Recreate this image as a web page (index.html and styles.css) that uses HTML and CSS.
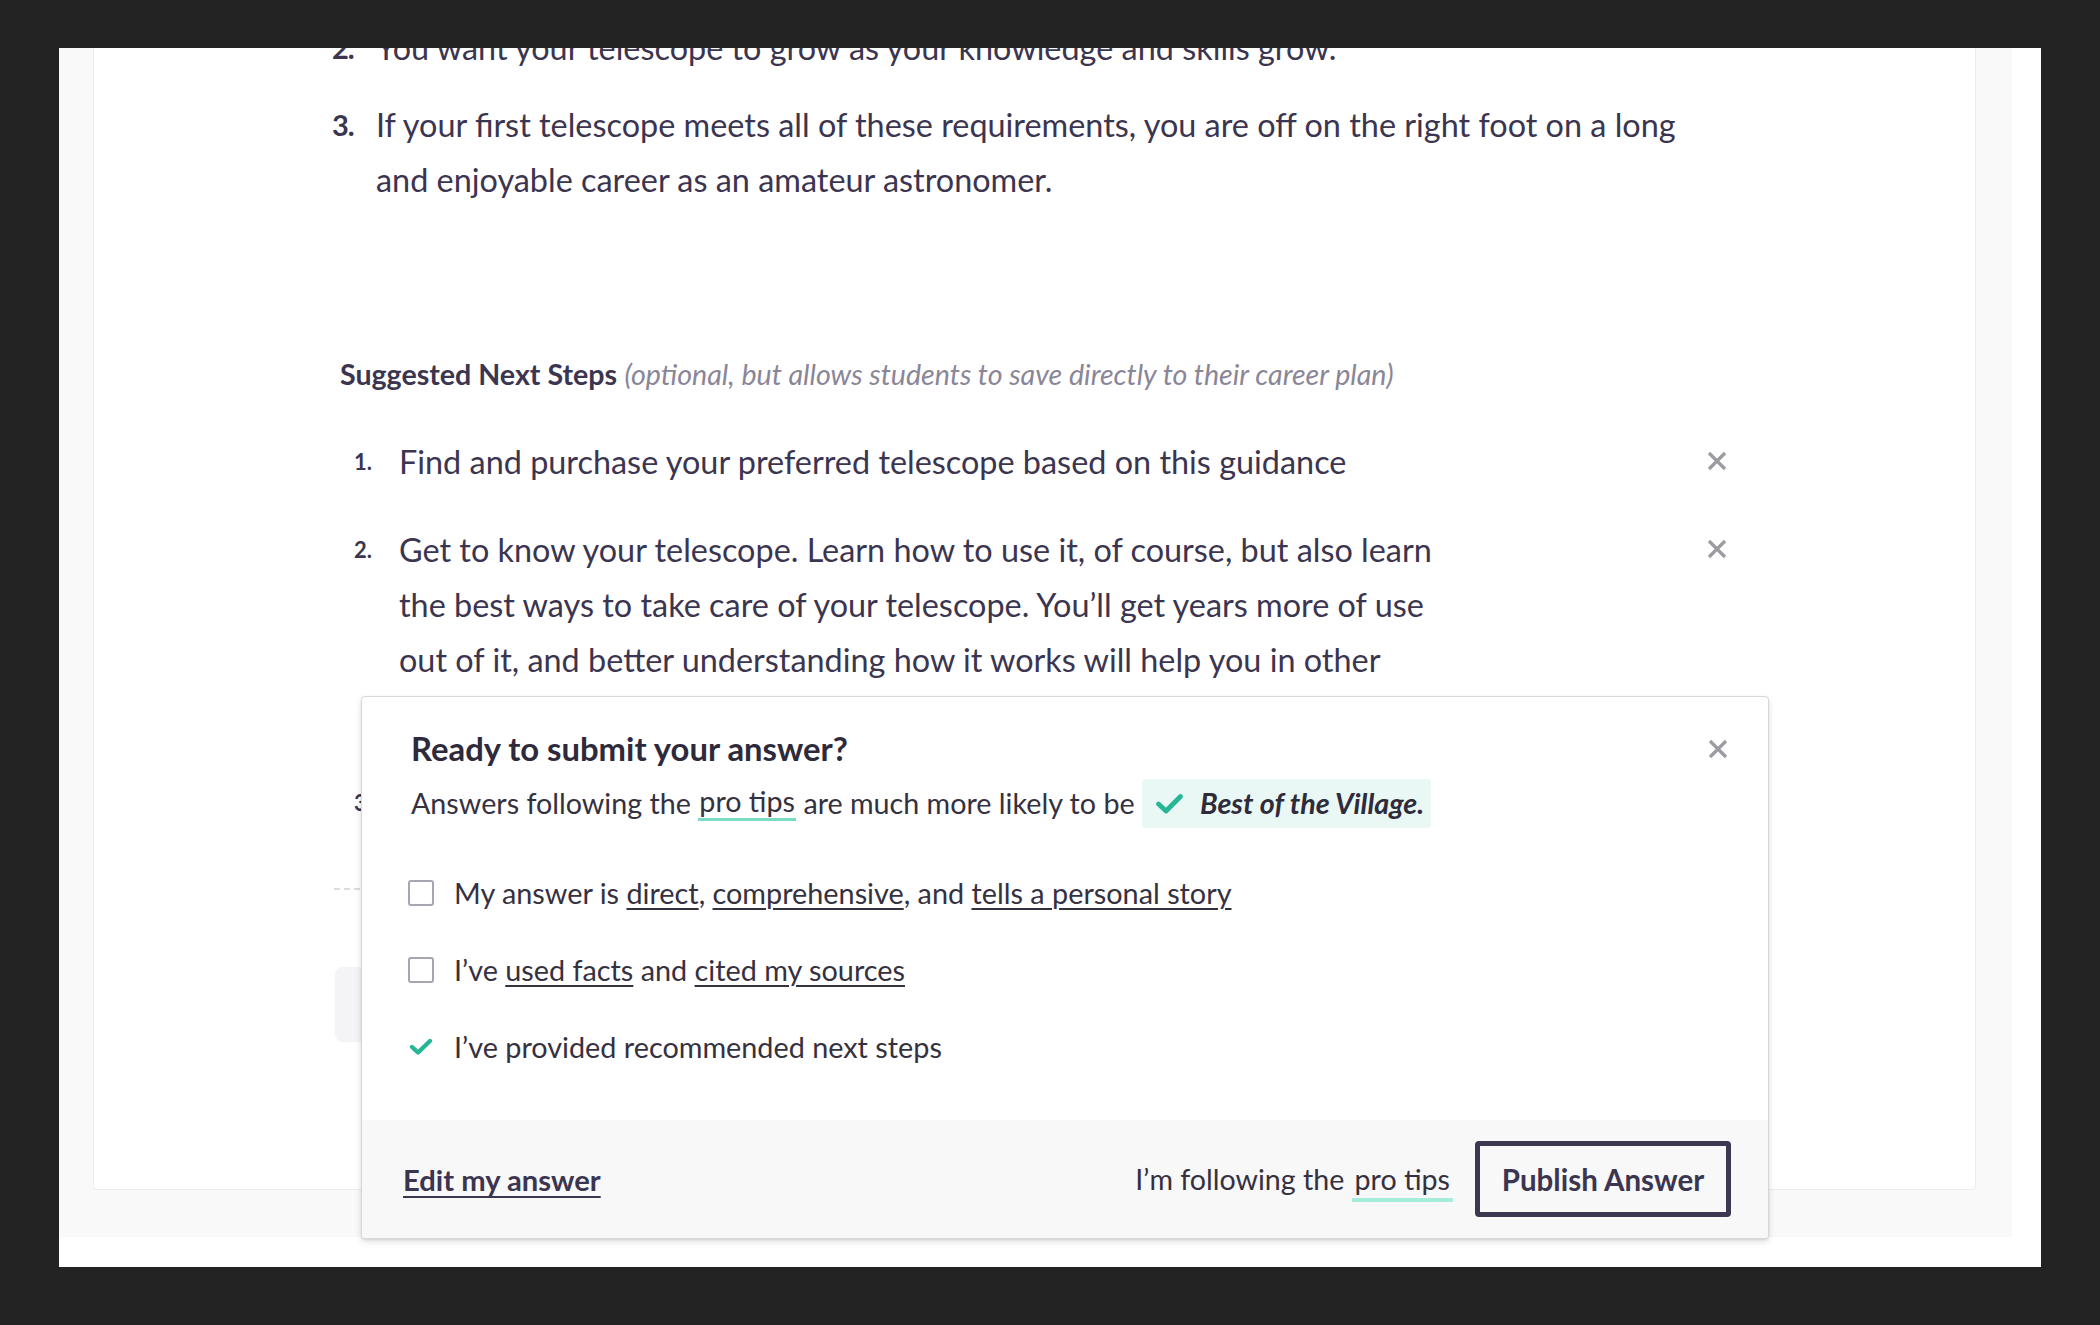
FILE: index.html
```html
<!DOCTYPE html>
<html lang="en">
<head>
<meta charset="utf-8">
<title>Ready to submit your answer?</title>
<link rel="stylesheet" href="styles.css">
</head>
<body>
<div class="screen">
  <div class="page">
    <div class="canvas">
      <div class="card">
        <ol class="answer-list">
          <li><span class="num">2.</span><span class="txt">You want your telescope to grow as your knowledge and skills grow.</span></li>
          <li><span class="num">3.</span><span class="txt">If your first telescope meets all of these requirements, you are off on the right foot on a long and enjoyable career as an amateur astronomer.</span></li>
        </ol>

        <p class="steps-heading"><strong>Suggested Next Steps</strong> <em>(optional, but allows students to save directly to their career plan)</em></p>

        <ol class="steps">
          <li><span class="num">1.</span><span class="txt">Find and purchase your preferred telescope based on this guidance</span>
            <button class="remove" aria-label="Remove"><svg viewBox="0 0 22 22" width="22" height="22"><path d="M3 3 L19 19 M19 3 L3 19"/></svg></button></li>
          <li><span class="num">2.</span><span class="txt">Get to know your telescope. Learn how to use it, of course, but also learn the best ways to take care of your telescope. You’ll get years more of use out of it, and better understanding how it works will help you in other areas of astronomy as well.</span>
            <button class="remove" aria-label="Remove"><svg viewBox="0 0 22 22" width="22" height="22"><path d="M3 3 L19 19 M19 3 L3 19"/></svg></button></li>
          <li><span class="num">3.</span><span class="txt">Join a local astronomy club.</span>
            <button class="remove" aria-label="Remove"><svg viewBox="0 0 22 22" width="22" height="22"><path d="M3 3 L19 19 M19 3 L3 19"/></svg></button></li>
        </ol>

        <div class="add-row"></div>
        <div class="add-btn"></div>
      </div>
    </div>

    <div class="popup">
      <div class="popup-body">
        <div class="popup-head">
          <h2>Ready to submit your answer?</h2>
          <button class="remove close" aria-label="Close"><svg viewBox="0 0 22 22" width="22" height="22"><path d="M3 3 L19 19 M19 3 L3 19"/></svg></button>
        </div>
        <p class="lead">Answers following the <a class="tip">pro tips</a> are much more likely to be <span class="badge"><svg class="check big" viewBox="0 0 29 22" width="29" height="22"><path d="M3.5 11 L11 18 L25.5 3.5"/></svg><em>Best of the Village.</em></span></p>

        <ul class="checks">
          <li><span class="box"></span><span>My answer is <a>direct</a>, <a>comprehensive</a>, and <a>tells a personal story</a></span></li>
          <li><span class="box"></span><span>I’ve <a>used facts</a> and <a>cited my sources</a></span></li>
          <li><svg class="check small" viewBox="0 0 26 20" width="26" height="20"><path d="M4 10 L10 15.5 L22 4"/></svg><span>I’ve provided recommended next steps</span></li>
        </ul>
      </div>
      <div class="popup-foot">
        <a class="edit">Edit my answer</a>
        <div class="foot-right">
          <span class="following">I’m following the <a class="tip">pro tips</a></span>
          <button class="publish">Publish Answer</button>
        </div>
      </div>
    </div>
  </div>
</div>
</body>
</html>
```

FILE: styles.css
```css
* { box-sizing: border-box; }

html, body {
  margin: 0;
  padding: 0;
  background: #232323;
}

body {
  font-family: Lato, "Noto Sans", sans-serif;
  color: #3b3550;
}

.screen {
  width: 2100px;
  height: 1325px;
  padding: 48px 59px 0 59px;
}

.page {
  position: relative;
  width: 1982px;
  height: 1219px;
  background: #ffffff;
  overflow: hidden;
}

.canvas {
  width: 1953px;
  height: 1189px;
  background: #f9f9fa;
  padding: 0 36px 0 34px;
  overflow: hidden;
}

.card {
  background: #ffffff;
  border: 1px solid #ececef;
  border-top: none;
  border-radius: 0 0 4px 4px;
  height: 1170px;
  padding: 0 0 0 238px;
  position: relative;
}

/* answer list (top) */
.answer-list {
  list-style: none;
  margin: -28px 0 0 0;
  padding: 0;
  width: 1385px;
}
.answer-list li {
  display: flex;
  font-size: 32.4px;
  line-height: 55px;
  margin-bottom: 22px;
}
.answer-list .num {
  width: 44px;
  flex: none;
  font-weight: 700;
  font-size: 29px;
  letter-spacing: -1px;
}

/* next steps */
.steps-heading {
  margin: 147px 0 0 8px;
  font-size: 28.6px;
  line-height: 40px;
}
.steps-heading strong { font-weight: 700; }
.steps-heading em { color: #8a8698; }

.steps {
  list-style: none;
  margin: 40px 0 0 0;
  padding: 0 0 0 22px;
}
.steps li {
  display: flex;
  align-items: flex-start;
  font-size: 32.4px;
  line-height: 55px;
  margin-bottom: 33px;
}
.steps .num {
  width: 45px;
  flex: none;
  font-size: 22px;
  font-weight: 700;
}
.steps .txt {
  width: 1045px;
  flex: none;
}
.remove {
  border: none;
  background: none;
  padding: 0;
  margin: 16px 0 0 262px;
  width: 22px;
  height: 22px;
  display: block;
}
.remove svg {
  display: block;
  stroke: #9b9ba1;
  stroke-width: 3.2;
  fill: none;
}

.add-row {
  position: absolute;
  left: 240px;
  top: 868px;
  width: 1200px;
  border-top: 2px dashed #dcdce0;
}
.add-btn {
  position: absolute;
  left: 241px;
  top: 947px;
  width: 260px;
  height: 75px;
  border-radius: 8px;
  background: #f4f4f6;
}

/* popup */
.popup {
  position: absolute;
  left: 302px;
  top: 648px;
  width: 1408px;
  height: 543px;
  background: #ffffff;
  border: 1px solid #d6d6db;
  border-radius: 4px;
  box-shadow: 0 3px 6px rgba(0, 0, 0, 0.12), 0 1px 2px rgba(0, 0, 0, 0.08);
  display: flex;
  flex-direction: column;
  overflow: hidden;
}
.popup-body {
  flex: 1;
  padding: 32px 0 0 49px;
}
.popup-head {
  display: flex;
  align-items: center;
  justify-content: space-between;
  height: 40px;
  padding-right: 39px;
}
.popup-head h2 {
  margin: 0;
  font-size: 32.8px;
  line-height: 40px;
  font-weight: 700;
  color: #2e2a3c;
}
.close { margin: 0; }

.lead {
  margin: 10px 0 0 0;
  font-size: 28.7px;
  line-height: 49px;
  display: flex;
  align-items: center;
  white-space: pre;
  color: #35313f;
}
.tip {
  color: inherit;
  text-decoration: none;
  border-bottom: 3px solid #7adcc4;
  line-height: 1.1;
  padding: 0 1px;
}
.badge {
  display: inline-flex;
  align-items: center;
  height: 49px;
  padding: 0 7px 0 13px;
  margin-left: 0;
  background: #eaf8f5;
  border-radius: 4px;
}
.badge em {
  font-weight: 700;
  color: #2f2b3a;
  margin-left: 16px;
}
.check path {
  fill: none;
  stroke: #25b795;
  stroke-linecap: round;
  stroke-linejoin: round;
}
.check.big path { stroke-width: 4.8; }
.check.small path { stroke-width: 4.4; }

.checks {
  list-style: none;
  margin: 45px 0 0 0;
  padding: 0;
}
.checks li {
  display: flex;
  align-items: center;
  height: 40px;
  margin-bottom: 37px;
  font-size: 28.8px;
  color: #35313f;
}
.checks a {
  color: inherit;
  text-decoration: underline;
  text-decoration-thickness: 2px;
  text-underline-offset: 4px;
}
.box {
  width: 26px;
  height: 26px;
  border: 2px solid #a8a5b3;
  border-radius: 3px;
  margin: 0 20px 0 -3px;
  flex: none;
}
.check.small {
  margin: 0 20px 0 -3px;
  flex: none;
}

.popup-foot {
  height: 118px;
  background: #f8f8f9;
  display: flex;
  align-items: center;
  justify-content: space-between;
  padding: 0 37px 0 41px;
}
.edit {
  font-size: 29.2px;
  font-weight: 700;
  color: #3b3550;
  text-decoration: underline;
  text-decoration-thickness: 2px;
  text-underline-offset: 5px;
}
.foot-right {
  display: flex;
  align-items: center;
}
.following {
  font-size: 28.6px;
  color: #35313f;
  margin-right: 22px;
}
.following .tip {
  border-bottom: 4px solid #a6ecdb;
  padding: 0 3px 2px 3px;
}
.publish {
  width: 256px;
  height: 76px;
  border: 5px solid #3e3751;
  border-radius: 4px;
  background: transparent;
  font-family: Lato, "Noto Sans", sans-serif;
  font-size: 29.5px;
  font-weight: 700;
  color: #3b3550;
  padding: 0;
}
```
